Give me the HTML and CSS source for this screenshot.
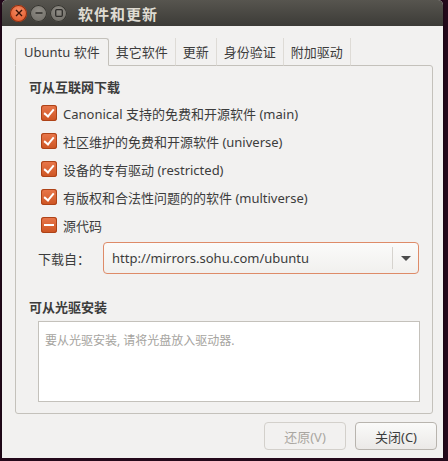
FILE: index.html
```html
<!DOCTYPE html>
<html lang="zh-CN">
<head>
    <meta charset="UTF-8">
    <title>软件和更新</title>
    <link rel="stylesheet" href="styles.css">
</head>
<body>
    <div class="window">
        <div class="titlebar">
            <span class="wbtn close">
                <svg width="8" height="8" viewBox="0 0 8 8"><path d="M1 1L7 7M7 1L1 7" stroke="#3a1206" stroke-width="1.4"/></svg>
            </span>
            <span class="wbtn">
                <svg width="8" height="8" viewBox="0 0 8 8"><path d="M0.5 4H7.5" stroke="#2e2d2a" stroke-width="1.4"/></svg>
            </span>
            <span class="wbtn">
                <svg width="8" height="8" viewBox="0 0 8 8"><rect x="0.7" y="0.7" width="6.6" height="6.6" rx="1" fill="none" stroke="#2e2d2a" stroke-width="1.3"/></svg>
            </span>
            <span class="title">软件和更新</span>
        </div>
        <div class="content">
            <div class="tabs">
                <div class="tab active">Ubuntu 软件</div>
                <div class="tab">其它软件</div>
                <div class="tab">更新</div>
                <div class="tab">身份验证</div>
                <div class="tab">附加驱动</div>
            </div>
            <div class="panel">
                <div class="heading">可从互联网下载</div>
                <ul class="checks">
                    <li><span class="box checked"></span>Canonical 支持的免费和开源软件 (main)</li>
                    <li><span class="box checked"></span>社区维护的免费和开源软件 (universe)</li>
                    <li><span class="box checked"></span>设备的专有驱动 (restricted)</li>
                    <li><span class="box checked"></span>有版权和合法性问题的的软件 (multiverse)</li>
                    <li><span class="box mixed"></span>源代码</li>
                </ul>
                <div class="source">
                    <span class="source-label">下载自：</span>
                    <div class="combo">
                        <span class="combo-text">http://mirrors.sohu.com/ubuntu</span>
                        <span class="combo-arrow"></span>
                    </div>
                </div>
                <div class="heading second">可从光驱安装</div>
                <div class="cdrom">要从光驱安装, 请将光盘放入驱动器.</div>
            </div>
            <div class="actions">
                <button class="btn" disabled>还原(V)</button>
                <button class="btn">关闭(C)</button>
            </div>
        </div>
    </div>
</body>
</html>
```

FILE: styles.css
```css
body {
    margin: 0;
    background: #24091b;
    font-family: "Noto Sans", "Noto Sans CJK SC", sans-serif;
    font-size: 13px;
    color: #3c3c3c;
}
.window {
    margin-left: 2px;
    width: 441px;
    height: 458px;
    border-radius: 5px 5px 0 0;
    overflow: hidden;
    background: #f2f1f0;
    box-shadow: 0 2px 3px rgba(0, 0, 0, 0.6);
}
.titlebar {
    height: 26px;
    display: flex;
    align-items: center;
    padding-left: 8px;
    gap: 3px;
    background: linear-gradient(#57554f, #3c3b37);
}
.wbtn {
    width: 17px;
    height: 17px;
    border-radius: 50%;
    background: radial-gradient(circle at 50% 35%, #8f8c85, #6a6862);
    box-shadow: inset 0 0 0 1px #35342f;
    display: flex;
    align-items: center;
    justify-content: center;
}
.wbtn.close {
    background: radial-gradient(circle at 50% 35%, #f58b64, #dc4f1e);
    box-shadow: inset 0 0 0 1px #8c2e10;
}
.title {
    margin-left: 8px;
    color: #dfdbd2;
    font-weight: bold;
    font-size: 15px;
    letter-spacing: 1px;
}
.content {
    padding: 12px 9px 0 13px;
}
.tabs {
    display: flex;
    height: 28px;
    position: relative;
    z-index: 1;
    margin-bottom: -1px;
}
.tab {
    padding: 0 7px;
    line-height: 29px;
    border-right: 1px solid #dedbd6;
    border-bottom: 1px solid #c4c1bb;
    color: #3c3c3c;
}
.tab.active {
    padding: 0 8px;
    border: 1px solid #c4c1bb;
    border-bottom-color: #f2f1f0;
    border-radius: 3px 3px 0 0;
    line-height: 27px;
    background: #f2f1f0;
}
.panel {
    width: 418px;
    height: 349px;
    border: 1px solid #c4c1bb;
    border-radius: 0 3px 3px 3px;
    padding: 12px 0 0 13px;
    box-sizing: border-box;
}
.heading {
    font-weight: bold;
    line-height: 18px;
}
.heading.second {
    margin-top: 24px;
}
.checks {
    list-style: none;
    margin: 3px 0 0 0;
    padding: 0 0 0 12px;
}
.checks li {
    display: flex;
    align-items: center;
    gap: 6px;
    height: 28px;
}
.box {
    width: 16px;
    height: 16px;
    border-radius: 3px;
    background: linear-gradient(#e9784c, #cd5422);
    box-shadow: inset 0 0 0 1px #ad4318;
    position: relative;
}
.box.checked::after {
    content: "";
    position: absolute;
    left: 5px;
    top: 2px;
    width: 4px;
    height: 8px;
    border: solid #fff;
    border-width: 0 2px 2px 0;
    transform: rotate(40deg);
}
.box.mixed::after {
    content: "";
    position: absolute;
    left: 3px;
    top: 7px;
    width: 10px;
    height: 2px;
    background: #fff;
}
.source {
    display: flex;
    align-items: center;
    margin: 3px 0 0 9px;
}
.source-label {
    width: 65px;
}
.combo {
    width: 316px;
    height: 32px;
    box-sizing: border-box;
    border: 1px solid #de8b68;
    border-radius: 4px;
    background: linear-gradient(#fbfbfa, #f1f0ee);
    display: flex;
    align-items: center;
}
.combo-text {
    flex: 1;
    padding-left: 8px;
    font-size: 13px;
    color: #3c3c3c;
}
.combo-arrow {
    width: 25px;
    height: 22px;
    border-left: 1px solid #d6d3ce;
    position: relative;
}
.combo-arrow::after {
    content: "";
    position: absolute;
    left: 8px;
    top: 9px;
    border: 5px solid transparent;
    border-top: 5px solid #4c4c4c;
    border-bottom: 0;
}
.cdrom {
    margin: 5px 0 0 9px;
    width: 382px;
    height: 81px;
    box-sizing: border-box;
    background: #fff;
    border: 1px solid #c4c1bb;
    padding: 9px 0 0 6px;
    color: #a6a4a0;
    font-size: 12px;
}
.actions {
    display: flex;
    justify-content: flex-end;
    gap: 9px;
    margin-top: 8px;
    margin-right: -3px;
}
.btn {
    width: 82px;
    height: 28px;
    font-family: inherit;
    font-size: 13px;
    color: #3c3c3c;
    border: 1px solid #b8b4ae;
    border-radius: 4px;
    background: linear-gradient(#fafaf9, #ebe9e7);
}
.btn:disabled {
    color: #aaa7a1;
    border-color: #d3d0cb;
    background: #f2f1f0;
}
```
